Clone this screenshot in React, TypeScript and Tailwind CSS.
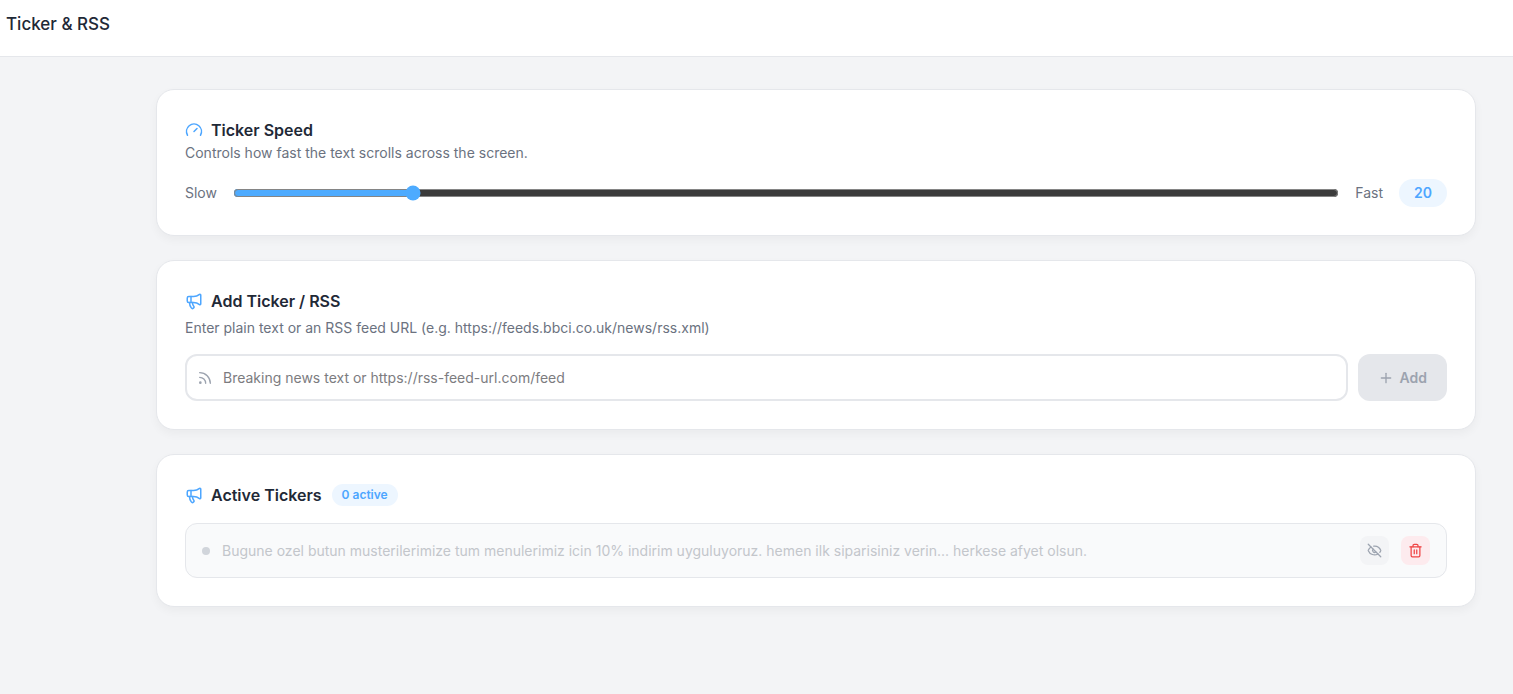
import { useState, type ReactNode } from "react";
import { EyeOff, Gauge, Megaphone, Plus, Rss, Trash2 } from "lucide-react";

function Card({ children }: { children: ReactNode }) {
  return (
    <section className="rounded-[18px] border border-[#e5e7eb] bg-white p-7 shadow-[0_4px_10px_rgba(0,0,0,0.04)]">
      {children}
    </section>
  );
}

function CardTitle({ icon, children }: { icon: ReactNode; children: ReactNode }) {
  return (
    <div className="flex h-6 items-center gap-2 text-[#4da6ff]">
      {icon}
      <h2 className="text-base font-semibold text-[#1f2937]">{children}</h2>
    </div>
  );
}

const tickers = [
  "Bugune ozel butun musterilerimize tum menulerimiz icin 10% indirim uyguluyoruz. hemen ilk siparisiniz verin... herkese afyet olsun.",
];

export default function App() {
  const [speed, setSpeed] = useState(20);
  const [text, setText] = useState("");

  return (
    <div className="min-h-screen bg-[#f3f4f6] font-['Inter',sans-serif] text-[#1f2937]">
      <header className="flex h-[57px] items-start border-b border-[#e5e7eb] bg-white px-[6px] pt-3">
        <h1 className="text-[17px] leading-6 font-medium">Ticker &amp; RSS</h1>
      </header>

      <main className="flex flex-col gap-6 pt-8 pr-[37px] pb-8 pl-[156px]">
        <Card>
          <CardTitle icon={<Gauge size={18} />}>Ticker Speed</CardTitle>
          <p className="text-sm leading-[22px] text-[#6b7280]">
            Controls how fast the text scrolls across the screen.
          </p>
          <div className="mt-[15px] flex items-center gap-4 text-sm text-[#6b7280]">
            <label htmlFor="speed">Slow</label>
            <input
              id="speed"
              type="range"
              min={5}
              max={100}
              value={speed}
              onChange={(e) => setSpeed(Number(e.target.value))}
              className="h-4 min-w-0 flex-1 accent-[#4dabff] scheme-dark"
            />
            <span>Fast</span>
            <output
              htmlFor="speed"
              className="flex h-7 w-12 items-center justify-center rounded-full bg-[#edf6ff] font-semibold text-[#4da6ff]"
            >
              {speed}
            </output>
          </div>
        </Card>

        <Card>
          <CardTitle icon={<Megaphone size={18} />}>Add Ticker / RSS</CardTitle>
          <label htmlFor="ticker" className="mt-1 block text-sm leading-[22px] text-[#6b7280]">
            Enter plain text or an RSS feed URL (e.g. https://feeds.bbci.co.uk/news/rss.xml)
          </label>
          <form className="mt-[15px] flex h-[47px] gap-[10px]" onSubmit={(e) => e.preventDefault()}>
            <div className="flex min-w-0 flex-1 items-center gap-[10px] rounded-xl border-2 border-[#e5e7eb] px-[10px]">
              <Rss size={16} className="shrink-0 text-[#9ca3af]" />
              <input
                id="ticker"
                type="text"
                value={text}
                onChange={(e) => setText(e.target.value)}
                placeholder="Breaking news text or https://rss-feed-url.com/feed"
                className="min-w-0 flex-1 bg-transparent text-sm outline-none placeholder:text-[#7c7c7f]"
              />
            </div>
            <button
              type="submit"
              disabled={text === ""}
              className="flex items-center gap-[6px] rounded-xl bg-[#e5e7eb] px-5 text-sm font-semibold text-[#9ca3af]"
            >
              <Plus size={16} />
              Add
            </button>
          </form>
        </Card>

        <Card>
          <div className="flex items-center gap-[10px]">
            <CardTitle icon={<Megaphone size={18} />}>Active Tickers</CardTitle>
            <span className="rounded-full bg-[#edf6ff] px-[10px] py-[3px] text-xs font-semibold text-[#4da6ff]">
              0 active
            </span>
          </div>
          <ul className="mt-4">
            {tickers.map((ticker) => (
              <li
                key={ticker}
                className="flex items-center gap-3 rounded-xl border border-[#e5e7eb] bg-[#f9fafb] px-4 py-3"
              >
                <span className="size-2 shrink-0 rounded-full bg-[#d1d5db]" />
                <span className="min-w-0 flex-1 truncate text-sm text-[#c3c6cb]">{ticker}</span>
                <button
                  type="button"
                  aria-label="Show ticker"
                  className="flex size-[29px] items-center justify-center rounded-lg bg-[#f3f4f6] text-[#9ca3af]"
                >
                  <EyeOff size={15} />
                </button>
                <button
                  type="button"
                  aria-label="Delete ticker"
                  className="flex size-[29px] items-center justify-center rounded-lg bg-[#fdebee] text-[#ef4444]"
                >
                  <Trash2 size={15} />
                </button>
              </li>
            ))}
          </ul>
        </Card>
      </main>
    </div>
  );
}
